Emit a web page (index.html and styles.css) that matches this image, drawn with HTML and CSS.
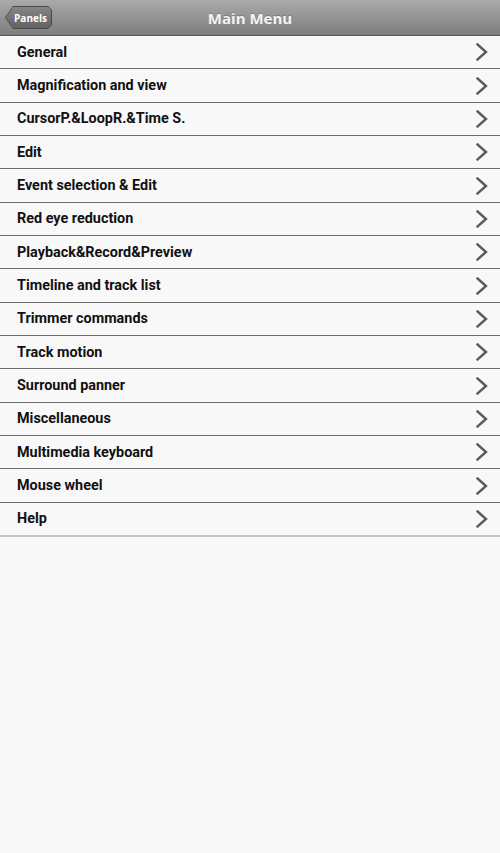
FILE: index.html
```html
<!DOCTYPE html>
<html lang="en">
<head>
    <meta charset="UTF-8">
    <title>Main Menu</title>
    <link rel="stylesheet" href="styles.css">
</head>
<body>
    <div class="header">
        <a class="back-btn" href="#"><span class="back-inner">Panels</span></a>
        <h1>Main Menu</h1>
    </div>
    <ul class="menu">
        <li><span>General</span><svg class="chev" viewBox="0 0 12 18"><polyline points="1.5,1.5 10,9 1.5,16.5"/></svg></li>
        <li><span>Magnification and view</span><svg class="chev" viewBox="0 0 12 18"><polyline points="1.5,1.5 10,9 1.5,16.5"/></svg></li>
        <li><span>CursorP.&amp;LoopR.&amp;Time S.</span><svg class="chev" viewBox="0 0 12 18"><polyline points="1.5,1.5 10,9 1.5,16.5"/></svg></li>
        <li><span>Edit</span><svg class="chev" viewBox="0 0 12 18"><polyline points="1.5,1.5 10,9 1.5,16.5"/></svg></li>
        <li><span>Event selection &amp; Edit</span><svg class="chev" viewBox="0 0 12 18"><polyline points="1.5,1.5 10,9 1.5,16.5"/></svg></li>
        <li><span>Red eye reduction</span><svg class="chev" viewBox="0 0 12 18"><polyline points="1.5,1.5 10,9 1.5,16.5"/></svg></li>
        <li><span>Playback&amp;Record&amp;Preview</span><svg class="chev" viewBox="0 0 12 18"><polyline points="1.5,1.5 10,9 1.5,16.5"/></svg></li>
        <li><span>Timeline and track list</span><svg class="chev" viewBox="0 0 12 18"><polyline points="1.5,1.5 10,9 1.5,16.5"/></svg></li>
        <li><span>Trimmer commands</span><svg class="chev" viewBox="0 0 12 18"><polyline points="1.5,1.5 10,9 1.5,16.5"/></svg></li>
        <li><span>Track motion</span><svg class="chev" viewBox="0 0 12 18"><polyline points="1.5,1.5 10,9 1.5,16.5"/></svg></li>
        <li><span>Surround panner</span><svg class="chev" viewBox="0 0 12 18"><polyline points="1.5,1.5 10,9 1.5,16.5"/></svg></li>
        <li><span>Miscellaneous</span><svg class="chev" viewBox="0 0 12 18"><polyline points="1.5,1.5 10,9 1.5,16.5"/></svg></li>
        <li><span>Multimedia keyboard</span><svg class="chev" viewBox="0 0 12 18"><polyline points="1.5,1.5 10,9 1.5,16.5"/></svg></li>
        <li><span>Mouse wheel</span><svg class="chev" viewBox="0 0 12 18"><polyline points="1.5,1.5 10,9 1.5,16.5"/></svg></li>
        <li class="last"><span>Help</span><svg class="chev" viewBox="0 0 12 18"><polyline points="1.5,1.5 10,9 1.5,16.5"/></svg></li>
    </ul>
</body>
</html>
```

FILE: styles.css
```css
body {
    margin: 0;
    background-color: #f8f8f8;
    font-family: Roboto, "Liberation Sans", sans-serif;
    color: #111;
}
.header {
    position: relative;
    height: 35px;
    background: linear-gradient(#aaa, #939393 50%, #7e7e7e);
    border-bottom: 1px solid #555;
    display: flex;
    align-items: center;
    justify-content: center;
}
.header h1 {
    margin: 0;
    font-family: "Open Sans", sans-serif;
    font-size: 15px;
    font-weight: bold;
    color: #f4f4f4;
    text-shadow: 0 -1px 0 rgba(0, 0, 0, 0.2);
}
.back-btn {
    position: absolute;
    left: 5px;
    top: 6px;
    width: 47px;
    height: 23px;
    display: flex;
    background: #4a4a4a;
    text-decoration: none;
    clip-path: polygon(0 50%, 8px 0, calc(100% - 4px) 0, 100% 4px, 100% calc(100% - 4px), calc(100% - 4px) 100%, 8px 100%);
}
.back-inner {
    flex: 1;
    margin: 1px;
    display: flex;
    align-items: center;
    justify-content: center;
    padding-left: 4px;
    font-family: "Open Sans", sans-serif;
    font-size: 10px;
    font-weight: bold;
    color: #fff;
    background: linear-gradient(#858585, #626262);
    clip-path: polygon(0 50%, 7px 0, calc(100% - 3px) 0, 100% 3px, 100% calc(100% - 3px), calc(100% - 3px) 100%, 7px 100%);
}
.menu {
    list-style: none;
    margin: 0;
    padding: 0;
}
.menu li {
    height: 32px;
    display: flex;
    align-items: center;
    justify-content: space-between;
    padding: 0 12px 0 17px;
    font-size: 14.4px;
    font-weight: bold;
    border-bottom: 1px solid #6a6a6a;
    margin-top: 0.34px;
}
.chev {
    width: 12px;
    height: 18px;
    fill: none;
    stroke: #5a5a5a;
    stroke-width: 2.4;
    stroke-linecap: square;
}
.menu li.last {
    border-bottom: 2px solid #c4c4c4;
}
```
